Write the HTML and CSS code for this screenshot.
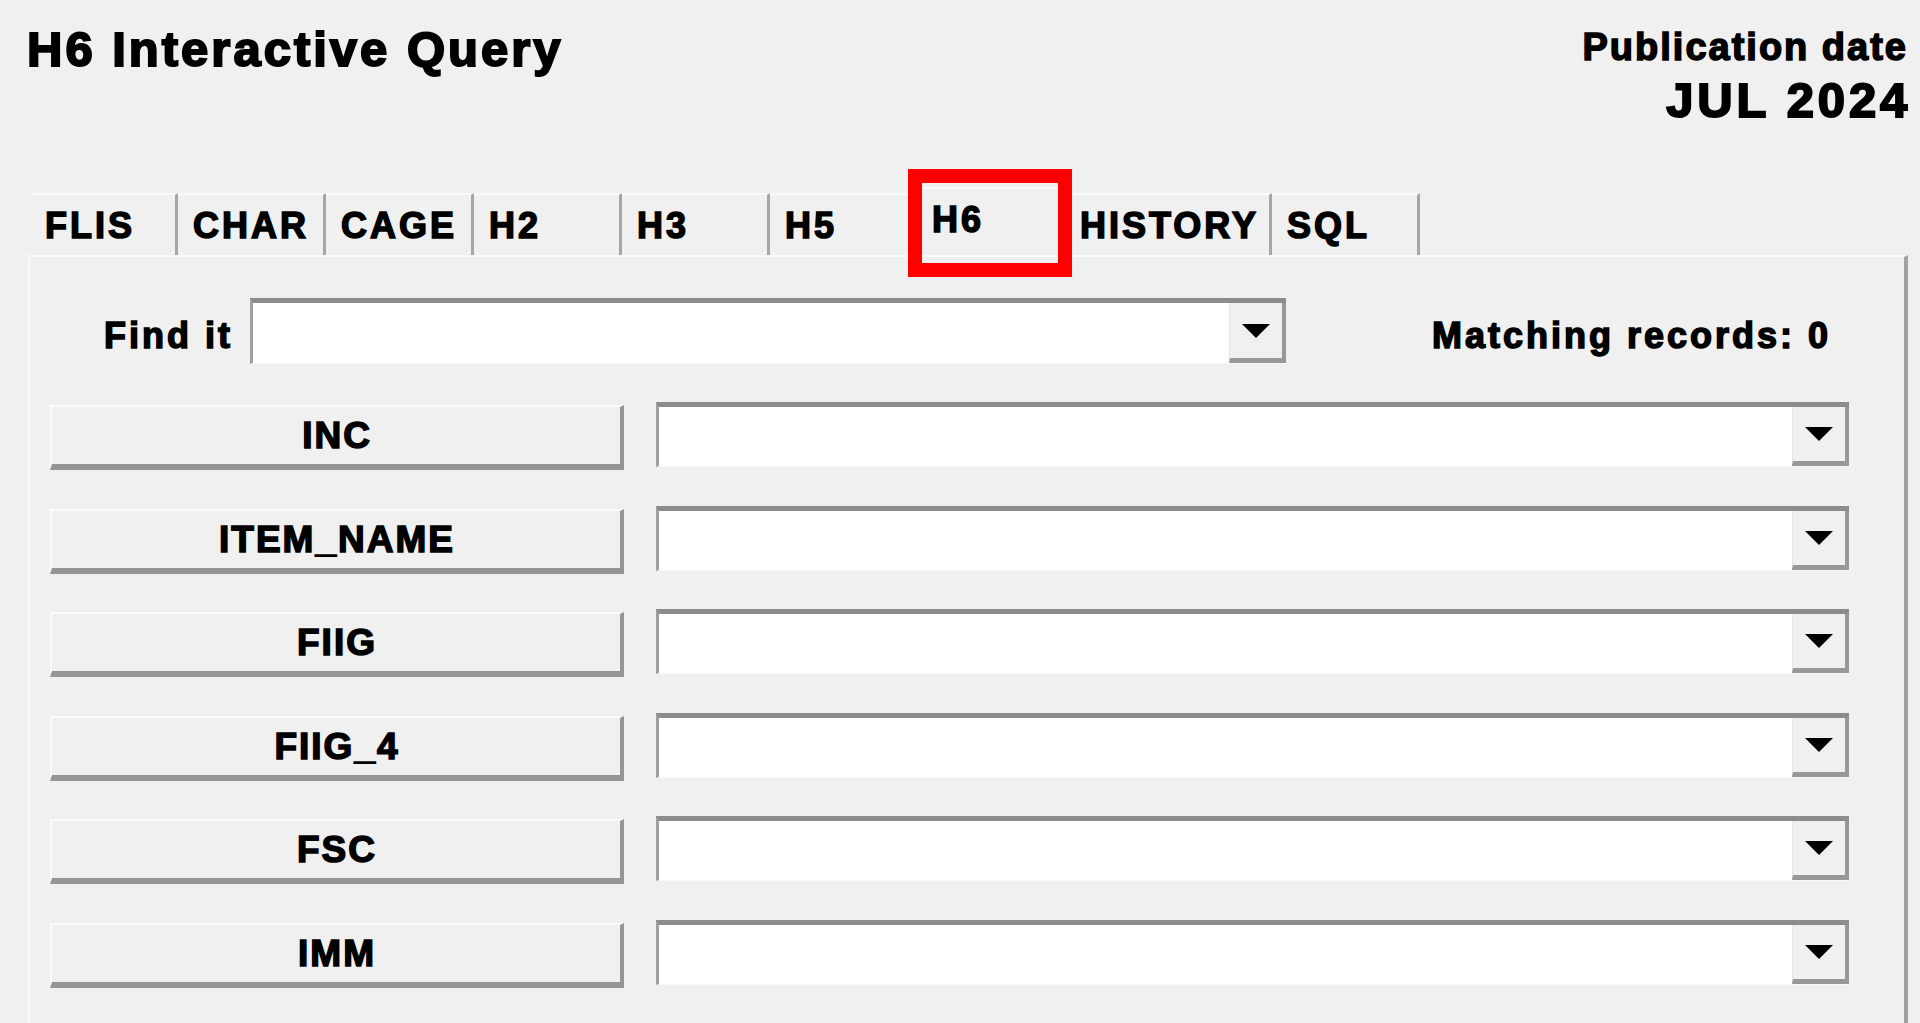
FILE: index.html
```html
<!DOCTYPE html>
<html lang="en">
<head>
    <meta charset="UTF-8">
    <meta name="viewport" content="width=device-width, initial-scale=1.0">
    <title>H6 Interactive Query</title>
    <link rel="stylesheet" href="styles.css">
</head>
<body>

    <div class="header">
        <h1 class="title">H6 Interactive Query</h1>
        <div class="pub">
            <div class="pub-label">Publication date</div>
            <div class="pub-date">JUL 2024</div>
        </div>
    </div>

    <!-- tab strip -->
    <div class="tabs">
        <div class="tab">FLIS</div>
        <div class="tab">CHAR</div>
        <div class="tab">CAGE</div>
        <div class="tab">H2</div>
        <div class="tab">H3</div>
        <div class="tab">H5</div>
        <div class="tab tab-active">H6</div>
        <div class="tab tab-wide">HISTORY</div>
        <div class="tab">SQL</div>
    </div>

    <div class="panel">
        <div class="find-row">
            <span class="find-label">Find it</span>
            <div class="combo combo-find"><span class="combo-btn"></span></div>
            <span class="matches">Matching records: 0</span>
        </div>

        <div class="fields">
            <div class="field-row"><button class="field-btn">INC</button><div class="combo combo-field"><span class="combo-btn"></span></div></div>
            <div class="field-row"><button class="field-btn">ITEM_NAME</button><div class="combo combo-field"><span class="combo-btn"></span></div></div>
            <div class="field-row"><button class="field-btn">FIIG</button><div class="combo combo-field"><span class="combo-btn"></span></div></div>
            <div class="field-row"><button class="field-btn">FIIG_4</button><div class="combo combo-field"><span class="combo-btn"></span></div></div>
            <div class="field-row"><button class="field-btn">FSC</button><div class="combo combo-field"><span class="combo-btn"></span></div></div>
            <div class="field-row"><button class="field-btn">IMM</button><div class="combo combo-field"><span class="combo-btn"></span></div></div>
        </div>
    </div>

</body>
</html>
```

FILE: styles.css
```css
body {
    margin: 0;
    background-color: #f0f0f0;
    color: #000;
    font-family: "Liberation Sans", Arial, sans-serif;
    font-weight: bold;
    -webkit-text-stroke: 1.5px #000; /* heavier, like the old bitmap font */
    overflow: hidden;
}

/* header */
.header {
    display: flex;
    justify-content: space-between;
    align-items: flex-start;
    padding: 0 12px 0 27px;
    height: 125px;
}
.title {
    margin: 0;
    padding-top: 25px;
    font-size: 49px;
    line-height: 49px;
    letter-spacing: 3px;
    -webkit-text-stroke: 2px #000;
}
.pub {
    padding-top: 28px;
    text-align: right;
}
.pub-label {
    font-size: 38px;
    line-height: 38px;
    letter-spacing: 2px;
}
.pub-date {
    margin-top: 10px;
    margin-right: -3px;
    font-size: 49px;
    line-height: 49px;
    letter-spacing: 3.8px;
    -webkit-text-stroke: 2px #000;
}

/* tabs */
.tabs {
    display: flex;
    align-items: flex-end;
    margin: 62px 0 0 30px;
    height: 68px;
}
.tab {
    box-sizing: border-box;
    width: 148px;
    height: 62px;
    padding: 13px 0 0 15px;
    border-top: 2px solid #f9f9f9;
    border-right: 3px solid #a6a6a6;
    font-size: 36px;
    line-height: 36px;
    letter-spacing: 3px;
}
.tab-wide {
    width: 206px;
    padding-left: 14px;
}
.tab-active {
    position: relative;
    height: 68px;
    padding-left: 14px;
    border-right: none;
    z-index: 1;
}
/* red highlight box */
.tab-active::after {
    content: "";
    position: absolute;
    left: -10px;
    right: -6px;
    top: -20px;
    bottom: -22px;
    border: 14px solid #ff0000;
}

/* panel */
.panel {
    box-sizing: border-box;
    margin: 0 12px 0 28px;
    min-height: 800px;
    padding: 41px 0 0 20px;
    border-top: 2px solid #fbfbfb;
    border-left: 2px solid #fbfbfb;
    border-right: 4px solid #a2a2a2;
}
.find-row {
    display: flex;
    align-items: center;
    height: 66px;
}
.find-label,
.matches {
    padding-top: 9px;
    font-size: 36px;
    line-height: 36px;
    letter-spacing: 3px;
}
.find-label {
    width: 183px;
    text-align: right;
}
.combo-find {
    width: 1036px;
    height: 66px;
    margin-left: 17px;
}
.matches {
    margin-left: 146px;
}

/* combo box */
.combo {
    box-sizing: border-box;
    display: flex;
    justify-content: flex-end;
    background-color: #fff;
    border-top: 5px solid #8c8c8c;
    border-left: 3px solid #a0a0a0;
    border-bottom: 1px solid #f7f7f7;
}
.combo-btn {
    box-sizing: border-box;
    width: 57px;
    display: flex;
    align-items: center;
    justify-content: center;
    background-color: #f0f0f0;
    border-left: 1px solid #e4e4e4;
    border-right: 4px solid #989898;
    border-bottom: 5px solid #989898;
}
.combo-btn::after {
    content: "";
    border-left: 14px solid transparent;
    border-right: 14px solid transparent;
    border-top: 14px solid #000;
}

/* field rows */
.fields {
    display: flex;
    flex-direction: column;
    gap: 38.5px;
    margin-top: 38px;
}
.field-row {
    display: flex;
    align-items: flex-start;
    height: 65px;
}
.field-btn {
    box-sizing: border-box;
    width: 574px;
    height: 65px;
    margin: 3px 0 0 0;
    padding: 0 0 0 2px;
    background-color: #f0f0f0;
    color: #000;
    font-family: inherit;
    font-weight: bold;
    font-size: 37px;
    line-height: 37px;
    letter-spacing: 2px;
    -webkit-text-stroke: 1.5px #000;
    border-style: solid;
    border-width: 2px 4px 6px 2px;
    border-color: #fbfbfb #959595 #959595 #fbfbfb;
}
.combo-field {
    width: 1193px;
    height: 65px;
    margin-left: 32px;
}
```
